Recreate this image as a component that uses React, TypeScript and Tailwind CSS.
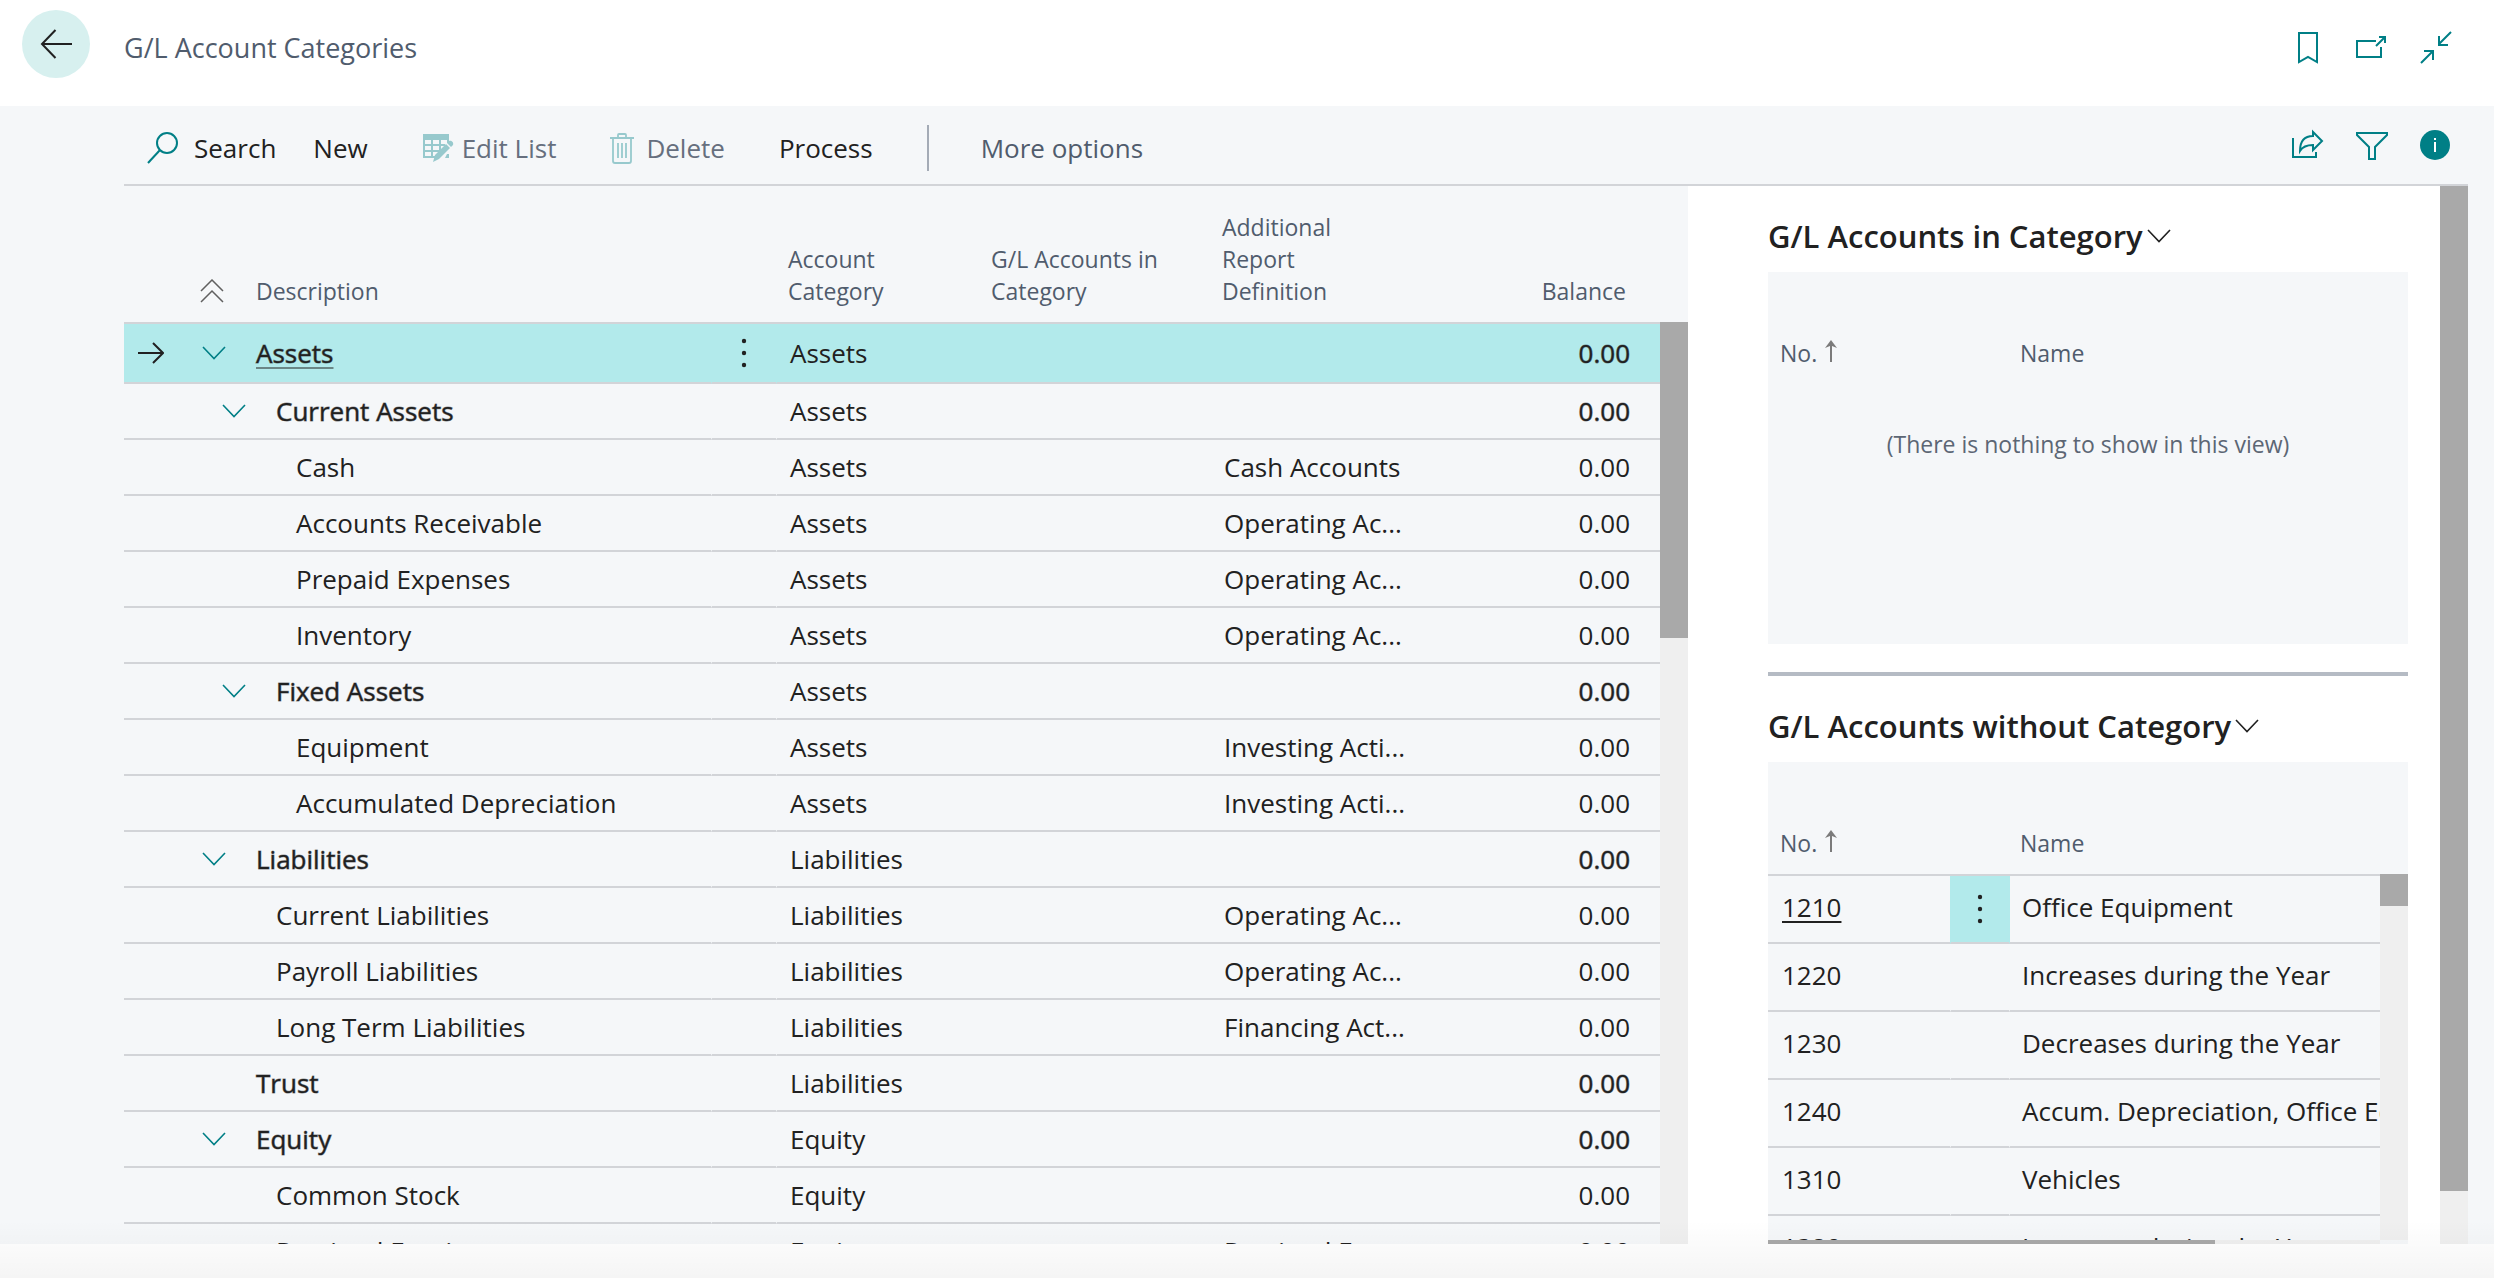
import React from 'react';

type Account = {
  name: string;
  level: 0 | 1 | 2;
  category: string;
  report?: string;
  expandable?: boolean;
  strong?: boolean;
};

const ACCOUNTS: Account[] = [
  { name: 'Assets', level: 0, category: 'Assets', expandable: true, strong: true },
  { name: 'Current Assets', level: 1, category: 'Assets', expandable: true, strong: true },
  { name: 'Cash', level: 2, category: 'Assets', report: 'Cash Accounts' },
  { name: 'Accounts Receivable', level: 2, category: 'Assets', report: 'Operating Ac...' },
  { name: 'Prepaid Expenses', level: 2, category: 'Assets', report: 'Operating Ac...' },
  { name: 'Inventory', level: 2, category: 'Assets', report: 'Operating Ac...' },
  { name: 'Fixed Assets', level: 1, category: 'Assets', expandable: true, strong: true },
  { name: 'Equipment', level: 2, category: 'Assets', report: 'Investing Acti...' },
  { name: 'Accumulated Depreciation', level: 2, category: 'Assets', report: 'Investing Acti...' },
  { name: 'Liabilities', level: 0, category: 'Liabilities', expandable: true, strong: true },
  { name: 'Current Liabilities', level: 1, category: 'Liabilities', report: 'Operating Ac...' },
  { name: 'Payroll Liabilities', level: 1, category: 'Liabilities', report: 'Operating Ac...' },
  { name: 'Long Term Liabilities', level: 1, category: 'Liabilities', report: 'Financing Act...' },
  { name: 'Trust', level: 0, category: 'Liabilities', strong: true },
  { name: 'Equity', level: 0, category: 'Equity', expandable: true, strong: true },
  { name: 'Common Stock', level: 1, category: 'Equity' },
  { name: 'Retained Earnings', level: 1, category: 'Equity', report: 'Retained Ear...' },
];

const UNCATEGORIZED = [
  { no: '1210', name: 'Office Equipment' },
  { no: '1220', name: 'Increases during the Year' },
  { no: '1230', name: 'Decreases during the Year' },
  { no: '1240', name: 'Accum. Depreciation, Office Equipment' },
  { no: '1310', name: 'Vehicles' },
  { no: '1320', name: 'Increases during the Year' },
];

const INDENT = ['pl-0', 'pl-5', 'pl-10'];

// group rows are a touch heavier than regular, without getting wider
const STRONG = '[-webkit-text-stroke:1px_#21212180]';

function Chevron({ className }: { className: string }) {
  return (
    <svg viewBox="0 0 24 14" className={`shrink-0 ${className}`} fill="none" stroke="currentColor" strokeWidth="1.6">
      <path d="M1 1l11 11.500L23 1" />
    </svg>
  );
}

function Kebab() {
  return (
    <svg viewBox="0 0 6 30" className="w-[6px] h-[30px] mx-auto" fill="currentColor">
      <circle cx="3" cy="3" r="2.200" />
      <circle cx="3" cy="15" r="2.200" />
      <circle cx="3" cy="27" r="2.200" />
    </svg>
  );
}

function SortArrow() {
  return (
    <svg viewBox="0 0 12 22" className="w-3 h-[22px] -mt-1" fill="none" stroke="#7b7b7b" strokeWidth="2">
      <path d="M6 22V3" />
      <path d="M0 8l6-8 6 8-5-2H5z" fill="#7b7b7b" stroke="none" />
    </svg>
  );
}

function PageHeader() {
  return (
    <header className="flex items-start h-[106px] bg-white pl-[22px] pr-[42px] pt-[10px]">
      <button aria-label="Back" className="w-[68px] h-[68px] rounded-full bg-[#d7f0ef] flex items-center justify-center text-[#212121]">
        <svg viewBox="0 0 32 30" className="w-8 h-[30px]" fill="none" stroke="currentColor" strokeWidth="2">
          <path d="M32 15H2M15.500 1L2 15l13.500 14" />
        </svg>
      </button>
      <h1 className="ml-[34px] mt-5 text-[27px] leading-9 text-[#505c6d]">G/L Account Categories</h1>
      <div className="ml-auto flex items-center gap-8 mt-5 text-[#007f86]">
        <button aria-label="Bookmark">
          <svg viewBox="0 0 32 34" className="w-8 h-[34px]" fill="none" stroke="currentColor" strokeWidth="2">
            <path d="M7 3h18v29l-9-5-9 5z" />
          </svg>
        </button>
        <button aria-label="Open in new window">
          <svg viewBox="0 0 32 34" className="w-8 h-[34px]" fill="none" stroke="currentColor" strokeWidth="2">
            <path d="M20 11H1v16h24V17" />
            <path d="M20 16l9-9M23 7h6v6" />
          </svg>
        </button>
        <button aria-label="Collapse">
          <svg viewBox="0 0 32 34" className="w-8 h-[34px]" fill="none" stroke="currentColor" strokeWidth="2">
            <path d="M31 2L19 14M19 6v9h9" />
            <path d="M1 33l12-12M4 21h9v9" />
          </svg>
        </button>
      </div>
    </header>
  );
}

function Toolbar() {
  return (
    <div className="flex items-center h-20 ml-[124px] mr-[26px] pl-[22px] pr-4 border-b-2 border-[#d2d4d8] text-[26px] text-[#212121]">
      <div className="flex items-center pt-[6px]">
        <button className="flex items-center gap-4">
          <svg viewBox="0 0 32 32" className="w-8 h-8" fill="none" stroke="#007f86" strokeWidth="2">
            <circle cx="21" cy="11" r="10" />
            <path d="M14 18L2 31" />
          </svg>
          Search
        </button>
        <button className="ml-[37px]">New</button>
        <button className="ml-[54px] flex items-center gap-2 text-[#666f7e]">
          <svg viewBox="0 0 32 32" className="w-8 h-8" fill="#97c9cd">
            <path d="M1 2h26v6H1z" />
            <path d="M1 8h2v18H1zM9 8h2v18H9zM17 8h2v12h-2zM25 8h2v3h-2zM1 12h22v2H1zM1 18h18v2H1zM1 24h12v2H1zM25 22h2v4h-4z" />
            <path d="M11 30l2-7 11-11 4 4-11 11z" />
            <path d="M25 11l2-2c2-1 5 1 4 4l-2 2z" />
          </svg>
          Edit List
        </button>
        <button className="ml-[54px] flex items-center gap-3 text-[#666f7e]">
          <svg viewBox="0 0 24 32" className="w-6 h-8" fill="none" stroke="#97c9cd" strokeWidth="1.8">
            <path d="M0 6h24M8 6V3q0-1 1-1h6q1 0 1 1v3M3 6v23q0 2 2 2h14q2 0 2-2V6" />
            <path d="M8 11v15M12 11v15M16 11v15" />
          </svg>
          Delete
        </button>
        <button className="ml-[54px]">Process</button>
        <div className="ml-[54px] w-[2px] h-[46px] bg-[#a4abb6]" />
        <button className="ml-[52px] text-[#505c6d]">More options</button>
      </div>
      <div className="ml-auto flex items-center gap-8 text-[#007f86]">
        <button aria-label="Share">
          <svg viewBox="0 0 32 32" className="w-8 h-8" fill="none" stroke="currentColor" strokeWidth="2">
            <path d="M1 9v19h23v-5" />
            <path d="M8 22C8 13 12 7 21 7V3l9 9-9 9v-5c-6 0-10 1-13 6z" />
          </svg>
        </button>
        <button aria-label="Filter">
          <svg viewBox="0 0 32 32" className="w-8 h-8" fill="none" stroke="currentColor" strokeWidth="2">
            <path d="M1 4h30v2L19 18v12h-6V18L1 6z" />
          </svg>
        </button>
        <button aria-label="Information">
          <svg viewBox="0 0 32 32" className="w-8 h-8">
            <circle cx="15" cy="16" r="15" fill="currentColor" />
            <path d="M14 9h2v2h-2zM14 13h2v10h-2z" fill="#fff" />
          </svg>
        </button>
      </div>
    </div>
  );
}

function AccountRow({ account, selected }: { account: Account; selected: boolean }) {
  return (
    <tr className={selected ? 'h-15 bg-[#b2eaeb]' : 'h-14'}>
      <td className="border-b-2 border-[#d2d4d8] py-0">
        <div className="flex items-center pl-[14px]">
          <span className="w-[64px] shrink-0">
            {selected && (
              <svg viewBox="0 0 26 22" className="w-[26px] h-[22px]" fill="none" stroke="#212121" strokeWidth="2">
                <path d="M0 11h25M15 1l10 10-10 10" />
              </svg>
            )}
          </span>
          <span className={INDENT[account.level]} />
          <span className="w-[54px] shrink-0 flex">
            {account.expandable && <Chevron className="w-6 h-[14px] text-[#007f86]" />}
          </span>
          {selected ? (
            <a href="#assets" className={`underline underline-offset-4 decoration-2 ${STRONG}`}>{account.name}</a>
          ) : (
            <span className={account.strong ? STRONG : ''}>{account.name}</span>
          )}
        </div>
      </td>
      <td className={`border-x border-b-2 border-b-[#d2d4d8] ${selected ? 'border-x-[#b2eaeb]' : 'border-x-[#f5f7f9]'}`}>
        {selected && <button aria-label="Show more options" className="block w-full"><Kebab /></button>}
      </td>
      <td className="border-b-2 border-[#d2d4d8] pl-[13px]">{account.category}</td>
      <td className="border-b-2 border-[#d2d4d8]" />
      <td className="border-b-2 border-[#d2d4d8] pl-[13px]">{account.report}</td>
      <td className={`border-b-2 border-[#d2d4d8] pr-[30px] text-right ${account.strong ? STRONG : ''}`}>0.00</td>
    </tr>
  );
}

function CategoryTable() {
  return (
    <section className="flex-1 min-w-0 ml-[124px] flex flex-col">
      <div className="flex min-h-0">
        <table className="flex-1 w-full table-fixed border-separate border-spacing-0 text-[26px] text-[#212121]">
          <colgroup>
            <col />
            <col className="w-[66px]" />
            <col className="w-[202px]" />
            <col className="w-[232px]" />
            <col className="w-[216px]" />
            <col className="w-[233px]" />
          </colgroup>
          <thead className="text-[23px] leading-8 text-[#505c6d]">
            <tr className="h-[138px] text-left align-bottom">
              <th className="border-b-2 border-[#d2d4d8] pb-[15px] font-normal">
                <div className="flex items-center">
                  <button aria-label="Collapse all" className="ml-[76px] w-14">
                    <svg viewBox="0 0 24 24" className="w-6 h-6" fill="none" stroke="#606060" strokeWidth="1.500">
                      <path d="M1 12L12 1l11 11M1 23l11-11 11 11" />
                    </svg>
                  </button>
                  Description
                </div>
              </th>
              <th className="border-b-2 border-[#d2d4d8]" />
              <th className="border-b-2 border-[#d2d4d8] pl-[11px] pr-20 pb-[15px] font-normal">Account Category</th>
              <th className="border-b-2 border-[#d2d4d8] pl-3 pb-[15px] font-normal">G/L Accounts in Category</th>
              <th className="border-b-2 border-[#d2d4d8] pl-[11px] pr-16 pb-[15px] font-normal">Additional Report Definition</th>
              <th className="border-b-2 border-[#d2d4d8] pr-[34px] pb-[15px] text-right font-normal">Balance</th>
            </tr>
          </thead>
          <tbody>
            {ACCOUNTS.map((account, i) => <AccountRow key={account.name} account={account} selected={i === 0} />)}
          </tbody>
        </table>
        <div className="w-7 shrink-0 flex flex-col pt-[136px]">
          <div className="flex-1 bg-[#efefef]">
            <div className="h-[316px] bg-[#a9a9a9]" />
          </div>
        </div>
      </div>
    </section>
  );
}

function PartTitle({ title }: { title: string }) {
  return (
    <h2>
      <button className="flex items-center gap-1 text-[31px] leading-10 font-semibold text-[#212121]">
        {title}
        <Chevron className="w-6 h-[14px]" />
      </button>
    </h2>
  );
}

function NoNameHead({ ruled }: { ruled: boolean }) {
  const edge = ruled ? 'border-b-2 border-[#d2d4d8]' : 'border-b-2 border-transparent';
  return (
    <thead className="text-[23px] leading-8 text-[#505c6d]">
      <tr className="h-[114px] text-left align-bottom">
        <th className={`${edge} pl-3 pb-[15px] font-normal`}>
          <span className="flex items-center gap-2">No. <SortArrow /></span>
        </th>
        <th className={edge} />
        <th className={`${edge} pl-[10px] pb-[15px] font-normal`}>Name</th>
      </tr>
    </thead>
  );
}

function NoNameCols() {
  return (
    <colgroup>
      <col className="w-[182px]" />
      <col className="w-[60px]" />
      <col />
    </colgroup>
  );
}

function FactBoxes() {
  return (
    <aside className="w-[752px] shrink-0 bg-white flex flex-col pl-20 pr-8 overflow-hidden">
      <div className="h-[86px] shrink-0 pt-[30px]"><PartTitle title="G/L Accounts in Category" /></div>
      <div className="h-[372px] shrink-0 bg-[#f5f7f9]">
        <table className="w-full table-fixed border-separate border-spacing-0">
          <NoNameCols />
          <NoNameHead ruled={false} />
        </table>
        <p className="mt-10 text-center text-[23px] leading-9 text-[#5c6674]">(There is nothing to show in this view)</p>
      </div>
      <div className="mt-7 h-[90px] shrink-0 border-t-4 border-[#b5bbc4] pt-[30px]">
        <PartTitle title="G/L Accounts without Category" />
      </div>
      <div className="flex-1 min-h-0 flex flex-col bg-[#f5f7f9]">
        <div className="flex-1 min-h-0 flex overflow-hidden">
          <div className="flex-1 min-w-0">
            <table className="w-full table-fixed border-separate border-spacing-0 text-[26px] text-[#212121]">
              <NoNameCols />
              <NoNameHead ruled />
              <tbody>
                {UNCATEGORIZED.map((row, i) => (
                  <tr key={row.no} className="h-[68px]">
                    <td className="border-b-2 border-[#d2d4d8] pl-[14px] pb-1">
                      {i === 0 ? <a href="#1210" className="underline underline-offset-4 decoration-2">{row.no}</a> : row.no}
                    </td>
                    <td className={`border-x border-b-2 border-b-[#d2d4d8] ${i === 0 ? 'bg-[#b2eaeb] border-x-[#b2eaeb]' : 'border-x-[#f5f7f9]'}`}>
                      {i === 0 && <button aria-label="Show more options" className="block w-full"><Kebab /></button>}
                    </td>
                    <td className="border-b-2 border-[#d2d4d8] pl-3 pb-1 whitespace-nowrap overflow-hidden">{row.name}</td>
                  </tr>
                ))}
              </tbody>
            </table>
          </div>
          <div className="w-7 shrink-0 flex flex-col pt-[112px]">
            <div className="flex-1 bg-[#efefef]">
              <div className="h-8 bg-[#a9a9a9]" />
            </div>
          </div>
        </div>
        <div className="h-1 shrink-0 mr-7 bg-[#efefef]">
          <div className="h-full w-[73%] bg-[#a9a9a9]" />
        </div>
      </div>
    </aside>
  );
}

export default function App() {
  return (
    <div className="relative h-screen flex flex-col bg-white font-['Segoe_UI','Open_Sans',sans-serif]">
      <PageHeader />
      <main className="flex-1 min-h-0 mb-[34px] flex flex-col bg-[#f5f7f9]">
        <Toolbar />
        <div className="flex-1 min-h-0 flex overflow-hidden">
          <CategoryTable />
          <FactBoxes />
          <div className="w-7 shrink-0 mr-[26px] bg-[#efefef]">
            <div className="h-[95%] bg-[#a9a9a9]" />
          </div>
        </div>
      </main>
      <div className="absolute inset-x-0 bottom-0 h-[58px] bg-linear-to-b from-transparent to-black/4 pointer-events-none" />
    </div>
  );
}
